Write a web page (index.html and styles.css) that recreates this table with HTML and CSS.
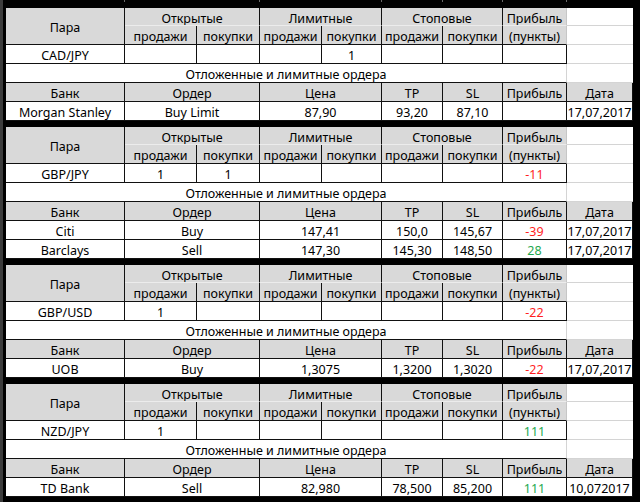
FILE: index.html
```html
<!DOCTYPE html>
<html lang="ru">
<head>
<meta charset="utf-8">
<title>Ордера</title>
<link rel="stylesheet" href="styles.css">
</head>
<body>
<div class="sheet">
  <div class="stub"><i></i><i></i><i></i><i></i><i></i><i></i><i></i><i></i><i></i></div>

  <div class="block">
    <div class="c h pair">Пара</div>
    <div class="c h s2 top">Открытые</div>
    <div class="c h s2 top">Лимитные</div>
    <div class="c h s2 top">Стоповые</div>
    <div class="c h top pr">Прибыль</div>
    <div class="g"></div>
    <div class="c h">продажи</div><div class="c h">покупки</div>
    <div class="c h">продажи</div><div class="c h">покупки</div>
    <div class="c h">продажи</div><div class="c h">покупки</div>
    <div class="c h pr">(пункты)</div>
    <div class="g"></div>
    <div class="c">CAD/JPY</div><div class="c"></div><div class="c"></div><div class="c"></div><div class="c">1</div><div class="c"></div><div class="c"></div><div class="c"></div>
    <div class="g"></div>
    <div class="c s8">Отложенные и лимитные ордера</div>
    <div class="g"></div>
    <div class="c h">Банк</div><div class="c h s2">Ордер</div><div class="c h s2">Цена</div><div class="c h">TP</div><div class="c h">SL</div><div class="c h">Прибыль</div><div class="c h">Дата</div>
    <div class="c">Morgan Stanley</div><div class="c s2">Buy Limit</div><div class="c s2">87,90</div><div class="c">93,20</div><div class="c">87,10</div><div class="c"></div><div class="c">17,07,2017</div>
  </div>

  <div class="block">
    <div class="c h pair">Пара</div>
    <div class="c h s2 top">Открытые</div>
    <div class="c h s2 top">Лимитные</div>
    <div class="c h s2 top">Стоповые</div>
    <div class="c h top pr">Прибыль</div>
    <div class="g"></div>
    <div class="c h">продажи</div><div class="c h">покупки</div>
    <div class="c h">продажи</div><div class="c h">покупки</div>
    <div class="c h">продажи</div><div class="c h">покупки</div>
    <div class="c h pr">(пункты)</div>
    <div class="g"></div>
    <div class="c">GBP/JPY</div><div class="c">1</div><div class="c">1</div><div class="c"></div><div class="c"></div><div class="c"></div><div class="c"></div><div class="c neg">-11</div>
    <div class="g"></div>
    <div class="c s8">Отложенные и лимитные ордера</div>
    <div class="g"></div>
    <div class="c h">Банк</div><div class="c h s2">Ордер</div><div class="c h s2">Цена</div><div class="c h">TP</div><div class="c h">SL</div><div class="c h">Прибыль</div><div class="c h">Дата</div>
    <div class="c">Citi</div><div class="c s2">Buy</div><div class="c s2">147,41</div><div class="c">150,0</div><div class="c">145,67</div><div class="c neg">-39</div><div class="c">17,07,2017</div>
    <div class="c">Barclays</div><div class="c s2">Sell</div><div class="c s2">147,30</div><div class="c">145,30</div><div class="c">148,50</div><div class="c pos">28</div><div class="c">17,07,2017</div>
  </div>

  <div class="block">
    <div class="c h pair">Пара</div>
    <div class="c h s2 top">Открытые</div>
    <div class="c h s2 top">Лимитные</div>
    <div class="c h s2 top">Стоповые</div>
    <div class="c h top pr">Прибыль</div>
    <div class="g"></div>
    <div class="c h">продажи</div><div class="c h">покупки</div>
    <div class="c h">продажи</div><div class="c h">покупки</div>
    <div class="c h">продажи</div><div class="c h">покупки</div>
    <div class="c h pr">(пункты)</div>
    <div class="g"></div>
    <div class="c">GBP/USD</div><div class="c">1</div><div class="c"></div><div class="c"></div><div class="c"></div><div class="c"></div><div class="c"></div><div class="c neg">-22</div>
    <div class="g"></div>
    <div class="c s8">Отложенные и лимитные ордера</div>
    <div class="g"></div>
    <div class="c h">Банк</div><div class="c h s2">Ордер</div><div class="c h s2">Цена</div><div class="c h">TP</div><div class="c h">SL</div><div class="c h">Прибыль</div><div class="c h">Дата</div>
    <div class="c">UOB</div><div class="c s2">Buy</div><div class="c s2">1,3075</div><div class="c">1,3200</div><div class="c">1,3020</div><div class="c neg">-22</div><div class="c">17,07,2017</div>
  </div>

  <div class="block">
    <div class="c h pair">Пара</div>
    <div class="c h s2 top">Открытые</div>
    <div class="c h s2 top">Лимитные</div>
    <div class="c h s2 top">Стоповые</div>
    <div class="c h top pr">Прибыль</div>
    <div class="g"></div>
    <div class="c h">продажи</div><div class="c h">покупки</div>
    <div class="c h">продажи</div><div class="c h">покупки</div>
    <div class="c h">продажи</div><div class="c h">покупки</div>
    <div class="c h pr">(пункты)</div>
    <div class="g"></div>
    <div class="c">NZD/JPY</div><div class="c">1</div><div class="c"></div><div class="c"></div><div class="c"></div><div class="c"></div><div class="c"></div><div class="c pos">111</div>
    <div class="g"></div>
    <div class="c s8">Отложенные и лимитные ордера</div>
    <div class="g"></div>
    <div class="c h">Банк</div><div class="c h s2">Ордер</div><div class="c h s2">Цена</div><div class="c h">TP</div><div class="c h">SL</div><div class="c h">Прибыль</div><div class="c h">Дата</div>
    <div class="c">TD Bank</div><div class="c s2">Sell</div><div class="c s2">82,980</div><div class="c">78,500</div><div class="c">85,200</div><div class="c pos">111</div><div class="c">10,072017</div>
  </div>
</div>
</body>
</html>
```

FILE: styles.css
```css
html, body {
  margin: 0;
  padding: 0;
  background: #000;
}

.sheet {
  width: 640px;
  height: 502px;
  box-sizing: border-box;
  background: #000;
  border-left: 3px solid #3c3c3c;
  padding: 0 7px 0 3px;
  display: flex;
  flex-direction: column;
  gap: 6px;
  overflow: hidden;
  font-family: "Noto Sans", "DejaVu Sans", sans-serif;
  font-size: 12.5px;
  color: #000;
}

.stub,
.block {
  display: grid;
  grid-template-columns: 119px 72px 63px 62px 60px 61px 60px 64px 66px;
}

.stub {
  height: 2px;
}

.stub i {
  display: block;
  border-right: 1px solid #6a6a6a;
}

.stub i:nth-child(2),
.stub i:nth-child(4),
.stub i:nth-child(9) {
  border-right-color: transparent;
}

.block {
  grid-template-rows: 18px;
  grid-auto-rows: 19px;
}

.c {
  box-sizing: border-box;
  background: #fff;
  border-right: 1px solid #111;
  border-bottom: 1px solid #111;
  display: flex;
  align-items: center;
  justify-content: center;
  padding-top: 3px;
  white-space: nowrap;
  overflow: hidden;
  line-height: 15px;
}

.h {
  background: #d9d9d9;
}

.top {
  border-bottom-color: #ececec;
}

.pr {
  border-right-color: #c6c6c6;
}

.pair {
  grid-row: span 2;
}

.s2 {
  grid-column: span 2;
}

.s8 {
  grid-column: span 8;
  border-right-color: #d4d4d4;
}

.g {
  box-sizing: border-box;
  background: #fff;
  border-bottom: 1px solid #d4d4d4;
}

.neg {
  color: #ff1f1f;
}

.pos {
  color: #1fa84f;
}
```
